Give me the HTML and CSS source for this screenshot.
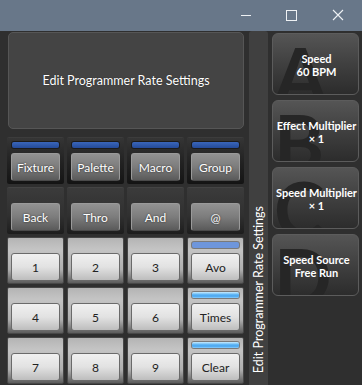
FILE: index.html
```html
<!DOCTYPE html>
<html lang="en">
<head>
    <meta charset="UTF-8">
    <meta name="viewport" content="width=device-width, initial-scale=1.0">
    <title>Programmer Rate</title>
    <link rel="stylesheet" href="styles.css">
</head>
<body>
    <!-- Window title bar -->
    <header class="titlebar">
        <svg class="win-icon" width="46" height="31" viewBox="0 0 46 31"><path d="M18 15.5h10" stroke="#eef1f4" stroke-width="1"/></svg>
        <svg class="win-icon" width="46" height="31" viewBox="0 0 46 31"><rect x="17.5" y="10.5" width="10" height="10" fill="none" stroke="#eef1f4" stroke-width="1"/></svg>
        <svg class="win-icon" width="46" height="31" viewBox="0 0 46 31"><path d="M18 10l10 10M28 10l-10 10" stroke="#eef1f4" stroke-width="1.1"/></svg>
    </header>

    <main class="main">
        <!-- Left side: title button + keypad -->
        <section class="left">
            <div class="big-btn">Edit Programmer Rate Settings</div>

            <div class="keypad">
                <div class="key key-dark"><span class="led"></span><span class="btn btn-dark">Fixture</span></div>
                <div class="key key-dark"><span class="led"></span><span class="btn btn-dark">Palette</span></div>
                <div class="key key-dark"><span class="led"></span><span class="btn btn-dark">Macro</span></div>
                <div class="key key-dark"><span class="led"></span><span class="btn btn-dark">Group</span></div>

                <div class="key key-mid"><span class="btn btn-dark">Back</span></div>
                <div class="key key-mid"><span class="btn btn-dark">Thro</span></div>
                <div class="key key-mid"><span class="btn btn-dark">And</span></div>
                <div class="key key-mid"><span class="btn btn-dark">@</span></div>

                <div class="key key-light"><span class="btn btn-light">1</span></div>
                <div class="key key-light"><span class="btn btn-light">2</span></div>
                <div class="key key-light"><span class="btn btn-light">3</span></div>
                <div class="key key-light"><span class="led led-soft"></span><span class="btn btn-light">Avo</span></div>

                <div class="key key-light"><span class="btn btn-light">4</span></div>
                <div class="key key-light"><span class="btn btn-light">5</span></div>
                <div class="key key-light"><span class="btn btn-light">6</span></div>
                <div class="key key-light"><span class="led led-bright"></span><span class="btn btn-light">Times</span></div>

                <div class="key key-light"><span class="btn btn-light">7</span></div>
                <div class="key key-light"><span class="btn btn-light">8</span></div>
                <div class="key key-light"><span class="btn btn-light">9</span></div>
                <div class="key key-light"><span class="led led-bright"></span><span class="btn btn-light">Clear</span></div>
            </div>
        </section>

        <!-- Vertical caption -->
        <div class="strip"><span class="strip-text">Edit Programmer Rate Settings</span></div>

        <!-- Softkeys -->
        <section class="right">
            <div class="soft"><span class="soft-letter">A</span><span class="soft-text">Speed<br>60 BPM</span></div>
            <div class="soft"><span class="soft-letter">B</span><span class="soft-text">Effect Multiplier<br>× 1</span></div>
            <div class="soft"><span class="soft-letter">C</span><span class="soft-text">Speed Multiplier<br>× 1</span></div>
            <div class="soft"><span class="soft-letter">D</span><span class="soft-text">Speed Source<br>Free Run</span></div>
        </section>
    </main>
</body>
</html>
```

FILE: styles.css
```css
body {
    margin: 0;
    padding: 0;
    background-color: #2f2f2f;
    font-family: Lato, "Noto Sans", sans-serif;
    color: #fff;
    height: 385px;
    overflow: hidden;
}
.titlebar {
    height: 31px;
    background-color: #687789;
    display: flex;
    justify-content: flex-end;
    padding-right: 1px;
}
.win-icon {
    display: block;
}
.main {
    display: flex;
    height: 354px;
}
.left {
    width: 237px;
    padding: 1px 3px 0 7px;
}
.big-btn {
    margin-left: 1px;
    height: 95px;
    background-color: #444;
    border: 1px solid #565656;
    border-radius: 5px;
    display: flex;
    align-items: center;
    justify-content: center;
    font-size: 12.5px;
    text-shadow: 0 0 1px rgba(0, 0, 0, 0.6);
}
.keypad {
    margin-top: 8px;
    display: grid;
    grid-template-columns: repeat(4, 57px);
    grid-auto-rows: 47px;
    gap: 3px;
}
.key {
    box-sizing: border-box;
    display: flex;
    flex-direction: column;
    justify-content: flex-end;
    align-items: center;
    padding-bottom: 3px;
    border-radius: 2px;
}
.key-dark {
    background: linear-gradient(#353535, #262626 40%, #141414);
    border-top: 1px solid #3c3c3c;
}
.key-mid {
    background: linear-gradient(#3b3b3b, #303030 60%, #1d1d1d);
    border-top: 1px solid #444;
}
.key-light {
    background: linear-gradient(#b4b4b4, #c4c4c4 25%, #b0b0b0 70%, #5c5c5c);
    border: 1px solid #474747;
    padding-bottom: 2px;
}
.led {
    width: 47px;
    height: 6px;
    border-radius: 2px;
    margin-bottom: 5px;
    background: linear-gradient(#3a66ba, #244a98);
    box-shadow: 0 0 0 1px #1b1b1b;
}
.led-soft {
    background: #6e96dc;
    box-shadow: 0 0 0 1px #7a7a7a;
}
.led-bright {
    background: linear-gradient(#c8ecff, #5ab2f4 45%, #4aa6ee 70%, #8ccfff);
    box-shadow: 0 0 0 1px #7a7a7a;
}
.btn {
    box-sizing: border-box;
    width: 49px;
    height: 28px;
    border-radius: 3px;
    display: flex;
    align-items: center;
    justify-content: center;
    font-size: 12px;
}
.btn-dark {
    background: linear-gradient(#929292, #7c7c7c 50%, #5a5a5a);
    border: 1px solid #9a9a9a;
    border-bottom-color: #4a4a4a;
    color: #fff;
    text-shadow: 0 0 2px rgba(0, 0, 0, 0.7);
}
.btn-light {
    background: linear-gradient(#f0f0f0, #e2e2e2 50%, #bdbdbd);
    border: 1px solid #6a6a6a;
    color: #222;
}
.strip {
    width: 19px;
    margin-left: 2px;
    background-color: #404040;
    border-radius: 3px 3px 0 0;
    display: flex;
    flex-direction: column;
    justify-content: flex-end;
    align-items: center;
    padding-bottom: 12px;
    box-sizing: border-box;
}
.strip-text {
    writing-mode: vertical-rl;
    transform: rotate(180deg);
    font-size: 12.5px;
    white-space: nowrap;
}
.right {
    flex: 1;
    padding: 2px 3px 0 4px;
    display: flex;
    flex-direction: column;
    gap: 5px;
}
.soft {
    position: relative;
    overflow: hidden;
    box-sizing: border-box;
    height: 62px;
    padding-top: 2px;
    border: 1px solid #5c5c5c;
    border-radius: 6px;
    background: linear-gradient(#555, #424242 45%, #2c2c2c);
    display: flex;
    align-items: center;
    justify-content: center;
    text-align: center;
}
.soft-letter {
    position: absolute;
    left: 1px;
    top: 3px;
    font-size: 76px;
    font-weight: bold;
    line-height: 1;
    color: #262626;
}
.soft-text {
    position: relative;
    font-size: 11px;
    font-weight: bold;
    line-height: 13px;
    white-space: nowrap;
    margin-left: 2px;
}
```
